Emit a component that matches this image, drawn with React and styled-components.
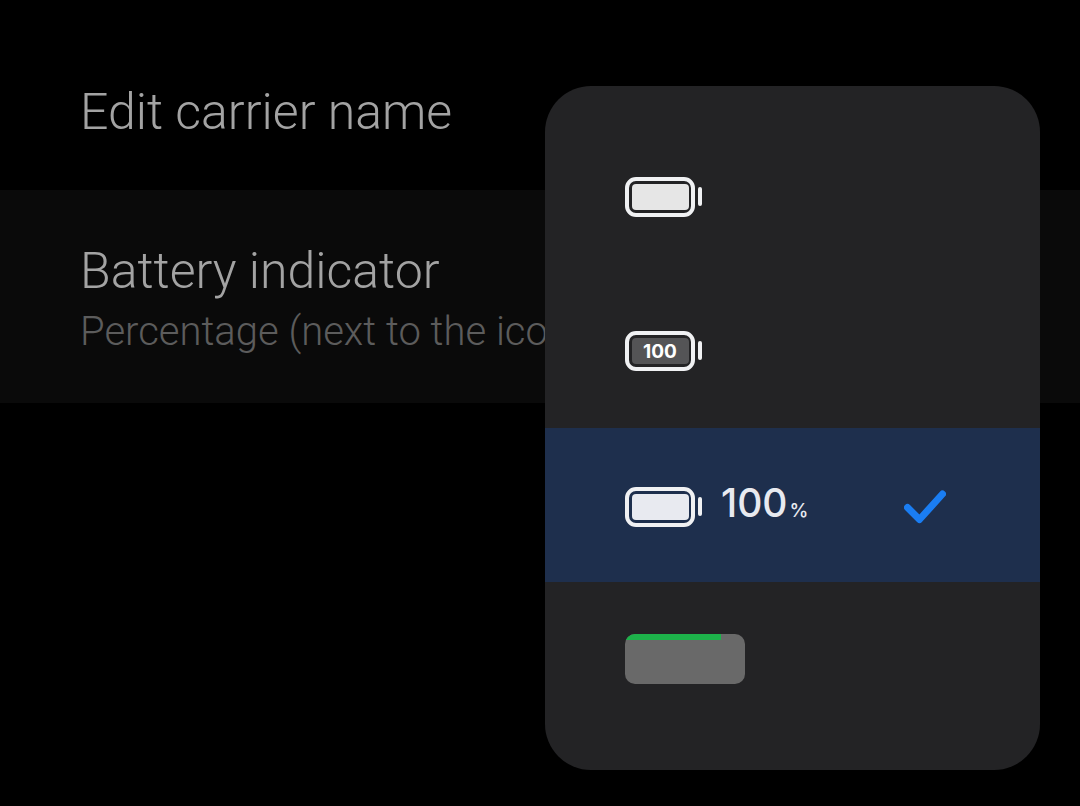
import React from 'react';
import styled, { createGlobalStyle } from 'styled-components';

const GlobalStyle = createGlobalStyle`
  html, body {
    margin: 0;
    padding: 0;
    background: #000;
  }
`;

const Screen = styled.div`
  position: relative;
  width: 1080px;
  height: 806px;
  overflow: hidden;
  background: #000;
  font-family: Roboto, "Liberation Sans", sans-serif;
`;

const SettingRow = styled.div`
  box-sizing: border-box;
  height: ${(props) => props.$height}px;
  padding: ${(props) => props.$top}px 0 0 80px;
  background: ${(props) => (props.$active ? '#0a0a0a' : '#000')};
`;

const RowTitle = styled.div`
  font-size: 50px;
  font-weight: 300;
  line-height: 56px;
  color: #a3a3a3;
  white-space: nowrap;
`;

const RowSub = styled.div`
  margin-top: 10px;
  font-size: 40px;
  font-weight: 300;
  line-height: 46px;
  color: #5c5c5c;
  white-space: nowrap;
`;

const Popup = styled.div`
  position: absolute;
  left: 545px;
  top: 86px;
  width: 495px;
  height: 684px;
  box-sizing: border-box;
  padding: 34px 0;
  background: #232325;
  border-radius: 46px;
`;

const Option = styled.div`
  display: flex;
  align-items: center;
  box-sizing: border-box;
  height: 154px;
  padding: ${(props) => (props.$selected ? '4px' : '0')} 94px 0 80px;
  background: ${(props) => (props.$selected ? '#1e2f4d' : 'transparent')};
`;

const BatteryValue = styled.span`
  flex: 1;
  margin-left: 19px;
  font-family: Inter, Roboto, sans-serif;
  font-size: 39px;
  font-weight: 500;
  line-height: 44px;
  color: #e8eaf0;
`;

const Percent = styled.span`
  margin-left: 2px;
  font-size: 19px;
`;

const BadgeText = styled.text`
  font-family: Inter, Roboto, sans-serif;
  font-size: 19px;
  font-weight: 700;
  fill: #fff;
`;

const GreenBattery = styled.div`
  width: 120px;
  height: 50px;
  border-radius: 10px;
  background: #696969;
  overflow: hidden;
`;

const GreenLevel = styled.div`
  height: 6px;
  background: #1db24a;
`;

const Battery = ({ fill, children }) => (
  <svg width="77" height="40" viewBox="0 0 77 40" style={{ flex: 'none' }}>
    <rect x="2" y="2" width="66" height="36" rx="9" fill="none" stroke="#f0f1f3" strokeWidth="4" />
    <rect x="7" y="7" width="57" height="26" rx="4" fill={fill} />
    <rect x="73" y="10" width="4" height="19" rx="2" fill="#f0f1f3" />
    {children}
  </svg>
);

const Check = () => (
  <svg width="42" height="34" viewBox="0 0 42 34" style={{ flex: 'none' }}>
    <path
      d="M3.5 17.5 L15.5 29.5 L38.5 4"
      fill="none"
      stroke="#1a7df2"
      strokeWidth="7"
      strokeLinecap="round"
      strokeLinejoin="round"
    />
  </svg>
);

export default function App() {
  return (
    <Screen>
      <GlobalStyle />
      <SettingRow $height={190} $top={84}>
        <RowTitle>Edit carrier name</RowTitle>
      </SettingRow>
      <SettingRow $active $height={213} $top={53}>
        <RowTitle>Battery indicator</RowTitle>
        <RowSub>Percentage (next to the icon)</RowSub>
      </SettingRow>
      <Popup>
        <Option>
          <Battery fill="#e6e6e6" />
        </Option>
        <Option>
          <Battery fill="#545456">
            <BadgeText x="35" y="26.5" textAnchor="middle">100</BadgeText>
          </Battery>
        </Option>
        <Option $selected>
          <Battery fill="#e8eaf0" />
          <BatteryValue>
            100<Percent>%</Percent>
          </BatteryValue>
          <Check />
        </Option>
        <Option>
          <GreenBattery>
            <GreenLevel style={{ width: '80%' }} />
          </GreenBattery>
        </Option>
      </Popup>
    </Screen>
  );
}
